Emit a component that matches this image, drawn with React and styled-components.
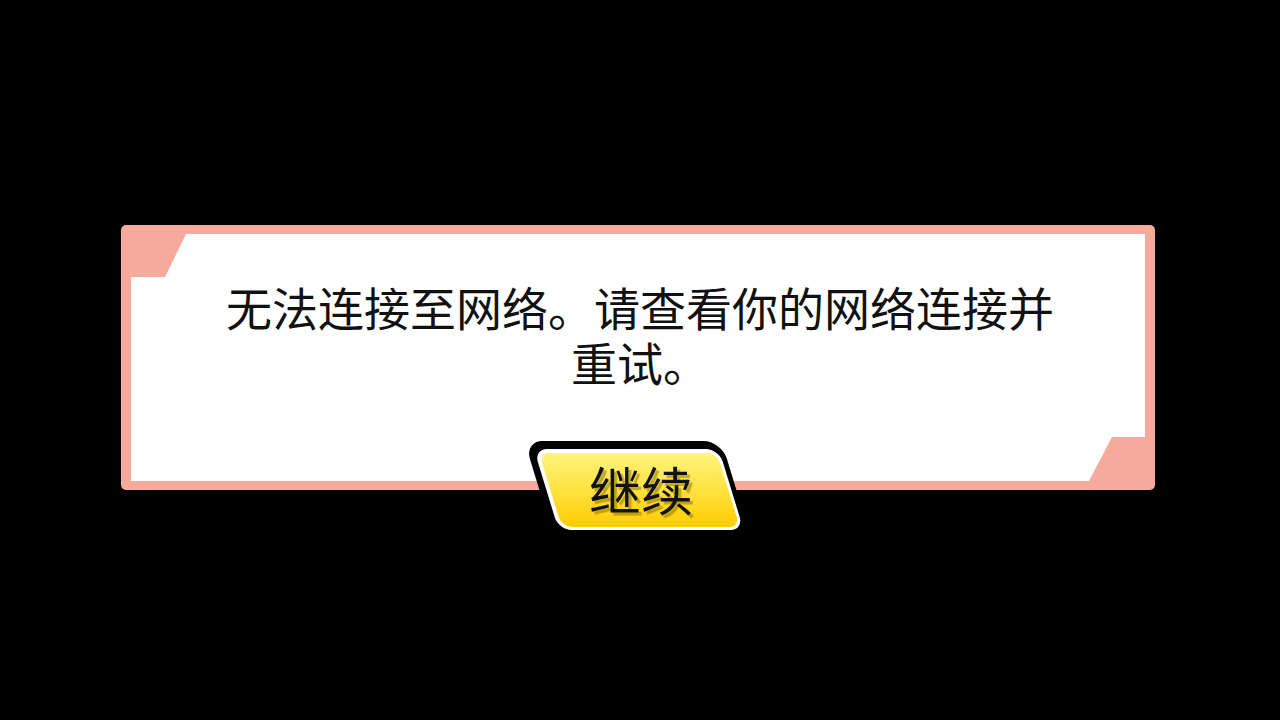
import React from "react";
import styled, { createGlobalStyle } from "styled-components";

const Global = createGlobalStyle`
  html, body { margin: 0; padding: 0; background: #000; }
  body { font-family: "Noto Sans CJK SC", "Noto Sans", sans-serif; }
`;

const Stage = styled.div`
  width: 1280px;
  height: 720px;
  background: #000;
  box-sizing: border-box;
  padding: 225px 0 0 121px;
  overflow: hidden;
`;

const Panel = styled.div`
  position: relative;
  width: 1034px;
  height: 265px;
  box-sizing: border-box;
  padding: 9px 10px 9px 10px;
  background: #f5aa9b;
  border-radius: 5px;
`;

const Sheet = styled.div`
  width: 100%;
  height: 100%;
  background: #fff;
  clip-path: polygon(55px 0, 100% 0, 100% 203px, 981px 203px, 958px 100%, 0 100%, 0 43px, 34px 43px);
  display: flex;
  justify-content: center;
  padding-top: 45px;
  box-sizing: border-box;
`;

const Message = styled.p`
  margin: 0;
  max-width: 850px;
  font-size: 46px;
  line-height: 55px;
  color: #111;
  text-align: center;
  font-weight: 400;
  padding-left: 4px;
`;

const ButtonSlot = styled.div`
  position: absolute;
  left: 50%;
  bottom: -43px;
  transform: translateX(-50%);
  margin-left: -1px;
`;

const ContinueButton = styled.button`
  display: block;
  width: 197px;
  height: 92px;
  padding: 8px 5px 3px 7px;
  box-sizing: border-box;
  border: none;
  border-radius: 18px;
  background: #000;
  transform: skewX(17deg);
  cursor: pointer;
`;

const WhiteRing = styled.div`
  height: 100%;
  padding: 4px 3px 3px 4px;
  box-sizing: border-box;
  border-radius: 13px;
  background: #fff;
`;

const Fill = styled.div`
  height: 100%;
  border-radius: 10px;
  background: linear-gradient(to bottom, #fff47e 0%, #ffe447 45%, #ffcc00 100%);
  display: flex;
  align-items: center;
  justify-content: center;
`;

const Label = styled.span`
  display: block;
  transform: skewX(-17deg);
  font-family: "Noto Sans CJK SC", "Noto Sans", sans-serif;
  font-size: 52px;
  line-height: 1;
  color: #111;
  text-shadow: 3px 3px 1px rgba(130, 105, 0, 0.5);
  margin-left: 4px;
  margin-top: -3px;
`;

export default function App() {
  return (
    <>
      <Global />
      <Stage>
        <Panel>
          <Sheet>
            <Message>无法连接至网络。请查看你的网络连接并重试。</Message>
          </Sheet>
          <ButtonSlot>
            <ContinueButton>
              <WhiteRing>
                <Fill>
                  <Label>继续</Label>
                </Fill>
              </WhiteRing>
            </ContinueButton>
          </ButtonSlot>
        </Panel>
      </Stage>
    </>
  );
}
